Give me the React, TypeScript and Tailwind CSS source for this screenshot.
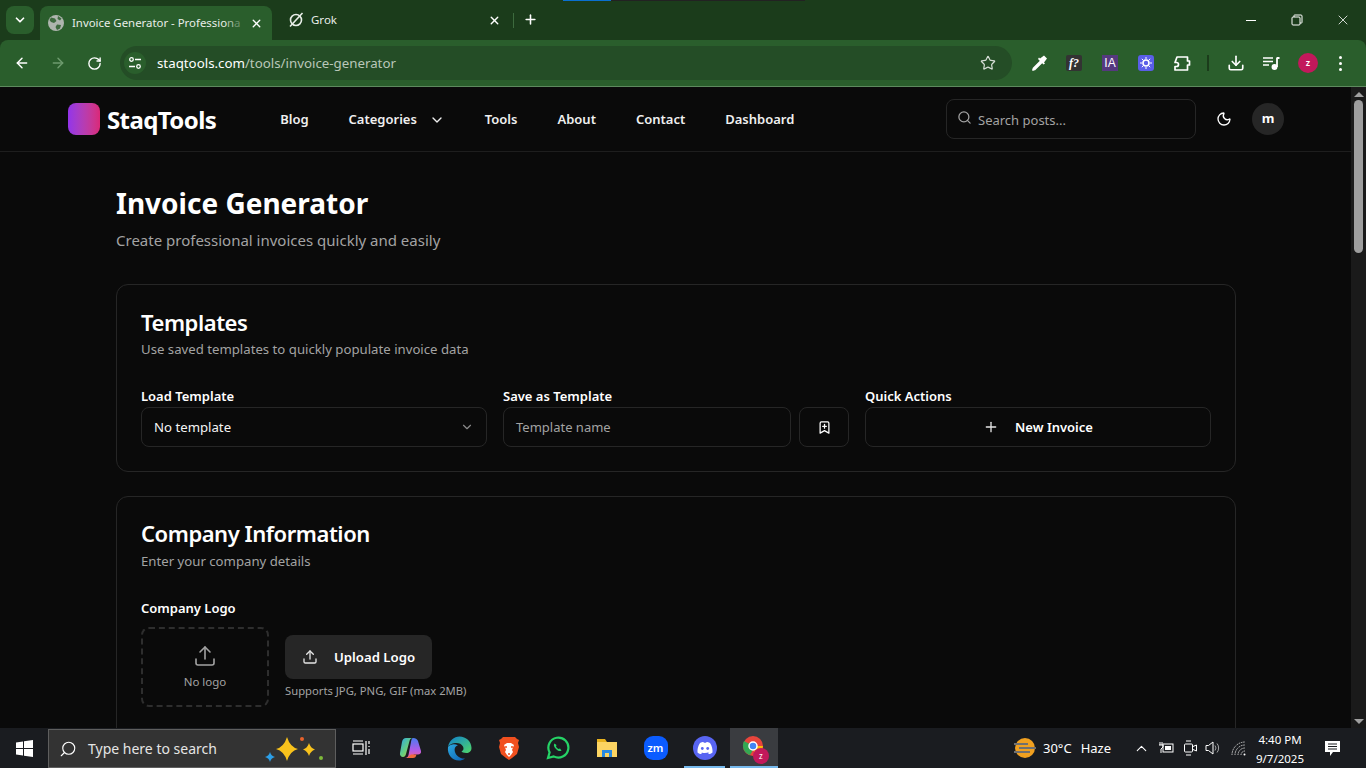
import { ArrowLeft, ArrowRight, RotateCw, Star, ChevronDown, X, Plus, Search, Moon, Upload, BookmarkPlus, Download, ChevronUp } from "lucide-react";

const font = "font-['Noto_Sans','Open_Sans',sans-serif]";

function TabStrip() {
  return (
    <div className="flex h-10 bg-[#1b3c1b] items-start relative">
      <div className="absolute left-[563px] top-0 w-[242px] h-px bg-[#222222]">
        <div className="w-[48px] h-px bg-[#0a70d0]" />
      </div>
      <div className="ml-[6px] mt-[6px] w-[28px] h-[28px] rounded-lg bg-[#2a5e2c] flex items-center justify-center text-white">
        <ChevronDown size={14} strokeWidth={3} />
      </div>
      <div className="ml-[6px] mt-[6px] w-[232px] h-[34px] rounded-t-lg bg-[#2a5e2c] flex items-center pl-[8px] text-white">
        <svg width="16" height="16" viewBox="0 0 16 16" className="shrink-0">
          <circle cx="8" cy="8" r="8" fill="#aeb5ae" />
          <path d="M3 2.500 7 3.500 8.500 6 6 8 3 7 1.500 5ZM9 9.500l4 .5-1 3.500-3 1.500-1.500-3ZM10 1l3.500 2.500L12 5.500 9.500 4Z" fill="#3d6a3e" />
        </svg>
        <span className="ml-[8px] text-[11.400px] whitespace-nowrap w-[178px] text-[#e8ede8]">Invoice Generator - Professio<span className="text-[#a9bfa9]">n</span><span className="text-[#6f936f]">a</span></span>
        <X size={13} strokeWidth={2.500} className="shrink-0" />
      </div>
      <div className="mt-[6px] w-[241px] h-[28px] flex items-center pl-[15px] pr-[12px] text-white">
        <svg width="18" height="18" viewBox="0 0 18 18" className="shrink-0" fill="none" stroke="#e8ede8" strokeWidth="1.600">
          <circle cx="9" cy="9" r="5.500" />
          <path d="M3 15.500 15.500 2" />
        </svg>
        <span className="ml-[6px] text-[11.500px] flex-1 text-[#e8ede8]">Grok</span>
        <X size={13} strokeWidth={2.500} />
      </div>
      <div className="mt-[13px] w-px h-[15px] bg-[#3d6b3e]" />
      <div className="ml-[9px] mt-[12px] text-white"><Plus size={15} strokeWidth={2.500} /></div>
      <div className="flex-1" />
      <div className="flex items-center text-white h-10">
        <div className="w-[46px] flex justify-center"><div className="w-[10px] h-px bg-white" /></div>
        <div className="w-[46px] flex justify-center">
          <svg width="12" height="12" viewBox="0 0 12 12" fill="none" stroke="white" strokeWidth="1"><rect x="1" y="3" width="8" height="8" rx="1" /><path d="M3 3V1.500a.5.5 0 0 1 .5-.5H10a1 1 0 0 1 1 1v6.500a.5.5 0 0 1-.5.5H9" /></svg>
        </div>
        <div className="w-[46px] flex justify-center"><X size={16} strokeWidth={1.200} /></div>
      </div>
    </div>
  );
}

function Toolbar() {
  return (
    <div className="h-[47px] bg-[#2a5e2c] rounded-t-lg border-b border-b-[#5d8a5e] flex items-center text-white relative">
      <ArrowLeft size={16} className="ml-[14px]" strokeWidth={2.200} />
      <ArrowRight size={16} className="ml-[20px] text-[#6e9b6e]" strokeWidth={2.200} />
      <RotateCw size={15} className="ml-[21px]" strokeWidth={2.200} />
      <div className="ml-[18px] w-[892px] h-[34px] rounded-full bg-[#244d26] flex items-center">
        <div className="ml-[4px] w-[22px] h-[22px] rounded-full bg-[#2a5e2c] flex items-center justify-center">
          <svg width="14" height="14" viewBox="0 0 14 14" fill="none" stroke="white" strokeWidth="1.300">
            <circle cx="3.500" cy="3.500" r="1.800" />
            <path d="M7 3.500h6M1 10.500h6" />
            <circle cx="10.500" cy="10.500" r="1.800" />
          </svg>
        </div>
        <span className="ml-[11px] pt-[1px] text-[13.300px] text-white">staqtools.com<span className="text-[#b9c7b9]">/tools/invoice-generator</span></span>
        <div className="flex-1" />
        <Star size={16} className="mr-[16px] text-[#d5ddd5]" strokeWidth={1.800} />
      </div>
      <svg width="18" height="18" viewBox="0 0 18 18" className="ml-[18px]">
        <path d="M11 7 3.500 14.500 3 16l1.500-.5L12 8Z" fill="#2f6fd0" stroke="white" strokeWidth="1.800" strokeLinejoin="round" />
        <path d="M10 4.500 14 1.500 17 4.500 14 8.500 15 9.500 13.500 10.500 8 5 9 3.500Z" fill="white" />
      </svg>
      <div className="ml-[18px] w-4 h-4 rounded-[2px] bg-[#333] flex items-center justify-center text-[12px] leading-none italic font-bold font-['Liberation_Serif',serif]">f?</div>
      <div className="ml-[20px] w-4 h-4 bg-[#55397f] flex items-center justify-center text-[12px] leading-none font-['Liberation_Sans',sans-serif]">IA</div>
      <div className="ml-[20px] w-4 h-4 rounded-[3px] bg-[#5a5ee8] flex items-center justify-center">
        <svg width="12" height="12" viewBox="0 0 12 12" fill="none" stroke="white"><circle cx="6" cy="6" r="3" strokeWidth="1.600" /><path d="M6 0v2M6 10v2M0 6h2M10 6h2M1.800 1.800l1.400 1.400M8.800 8.800l1.400 1.400M1.800 10.200l1.400-1.400M8.800 3.200l1.400-1.400" strokeWidth="1" /></svg>
      </div>
      <svg width="18" height="18" viewBox="0 0 18 18" fill="none" stroke="white" strokeWidth="1.700" strokeLinejoin="round" className="ml-[19px]">
        <path d="M4 3h10.500v4h2v4h-2v5H2v-3.500h1.500a1.500 1.500 0 0 0 0-4H2L4 3Z" />
      </svg>
      <div className="ml-[16px] w-[2px] h-[16px] bg-[#1b3c1b]" />
      <Download size={18} className="ml-[18px]" strokeWidth={2.200} />
      <svg width="17" height="16" viewBox="0 0 17 16" fill="none" stroke="white" strokeWidth="1.500" className="ml-[18px]">
        <path d="M0 3h10M0 6.500h10M0 10h6" />
        <path d="M14 3h2.500M14 2.500V12" strokeWidth="1.800" />
        <circle cx="11.500" cy="12" r="2.200" fill="white" />
      </svg>
      <div className="ml-[18px] w-5 h-5 rounded-full bg-[#c2185b] flex items-center justify-center text-[9px] font-semibold">z</div>
      <div className="ml-[21px] flex flex-col gap-[3px]">
        <div className="w-[3px] h-[3px] rounded-full bg-white" />
        <div className="w-[3px] h-[3px] rounded-full bg-white" />
        <div className="w-[3px] h-[3px] rounded-full bg-white" />
      </div>
    </div>
  );
}

function NavBar() {
  return (
    <div className="h-[65px] border-b border-b-[#1e1e1e] flex items-center pl-[68px] pr-[67px] shrink-0">
      <div className="w-8 h-8 rounded-lg bg-gradient-to-r from-[#9333ea] to-[#db2777]" />
      <span className="ml-[7px] mt-[2px] text-[24px] font-bold text-white tracking-[-0.6px]">StaqTools</span>
      <nav className="ml-[64px] pt-[2px] flex items-center gap-[40px] text-[13px] font-semibold text-[#f0f0f0]">
        <span>Blog</span>
        <span className="flex items-center">Categories<ChevronDown size={16} className="ml-[12px]" /></span>
        <span>Tools</span>
        <span>About</span>
        <span>Contact</span>
        <span>Dashboard</span>
      </nav>
      <div className="flex-1" />
      <div className="w-[250px] h-10 border border-[#262626] rounded-lg flex items-center pl-[10px] text-[#a3a3a3]">
        <Search size={15} className="-mt-[3px]" />
        <span className="ml-[6px] pt-[3px] text-[13px]">Search posts...</span>
      </div>
      <Moon size={16} className="ml-[20px] text-white" />
      <div className="ml-[20px] w-8 h-8 rounded-full bg-[#262626] flex items-center justify-center text-white text-[13px] font-bold">m</div>
    </div>
  );
}

function Label({ children }: { children: React.ReactNode }) {
  return <div className="text-[13px] font-semibold text-white leading-[20px] mb-[1px]">{children}</div>;
}

function Main() {
  return (
    <div className="flex-1 overflow-hidden pl-[116px] pr-[115px]">
      <h1 className="mt-[31px] text-[28px] leading-[40px] font-bold text-white">Invoice Generator</h1>
      <p className="mt-[6px] text-[15px] leading-[23px] text-[#a3a3a3]">Create professional invoices quickly and easily</p>

      <section className="mt-[32px] h-[188px] border border-[#262626] rounded-xl px-[24px] pt-[23px]">
        <h2 className="text-[22px] leading-[28px] font-semibold text-white tracking-[-0.450px]">Templates</h2>
        <p className="mt-[3px] text-[13.200px] leading-[20px] text-[#a3a3a3]">Use saved templates to quickly populate invoice data</p>
        <div className="mt-[27px] grid grid-cols-3 gap-[16px]">
          <div>
            <Label>Load Template</Label>
            <div className="h-10 border border-[#262626] rounded-lg flex items-center justify-between px-[12px] text-[13.200px] text-[#f5f5f5]">
              <span className="pt-[1px]">No template</span>
              <ChevronDown size={14} className="text-[#8a8a8a]" />
            </div>
          </div>
          <div>
            <Label>Save as Template</Label>
            <div className="flex gap-[8px]">
              <div className="flex-1 h-10 border border-[#262626] rounded-lg flex items-center px-[12px] pt-[2px] text-[13px] text-[#a3a3a3]">Template name</div>
              <div className="w-[50px] h-10 border border-[#262626] rounded-lg flex items-center justify-center text-white"><BookmarkPlus size={15} /></div>
            </div>
          </div>
          <div>
            <Label>Quick Actions</Label>
            <div className="h-10 border border-[#262626] rounded-lg flex items-center justify-center text-[13px] font-semibold text-white">
              <Plus size={16} className="mr-[16px] text-[#e5e5e5]" /><span className="pt-[1px]">New Invoice</span>
            </div>
          </div>
        </div>
      </section>

      <section className="mt-[24px] h-[300px] border border-[#262626] rounded-xl px-[24px] pt-[22px]">
        <h2 className="text-[22px] leading-[28px] font-semibold text-white tracking-[-0.450px]">Company Information</h2>
        <p className="mt-[4px] text-[13.200px] leading-[20px] text-[#a3a3a3]">Enter your company details</p>
        <div className="mt-[27px]"><Label>Company Logo</Label></div>
        <div className="mt-[9px] flex items-center">
          <div className="w-32 h-20 border-2 border-dashed border-[#2e2e2e] rounded-lg flex flex-col items-center justify-center text-[#a3a3a3]">
            <Upload size={24} strokeWidth={1.600} />
            <span className="mt-[5px] text-[11.500px]">No logo</span>
          </div>
          <div className="ml-[16px]">
            <div className="w-[147px] h-11 rounded-lg bg-[#262626] flex items-center justify-center text-[13.200px] font-semibold text-white">
              <Upload size={16} className="mr-[16px] text-[#e5e5e5]" /><span className="pt-[1px]">Upload Logo</span>
            </div>
            <p className="mt-[4px] text-[11.250px] leading-[16px] text-[#a3a3a3]">Supports JPG, PNG, GIF (max 2MB)</p>
          </div>
        </div>
      </section>
    </div>
  );
}

function Scrollbar() {
  return (
    <div className="w-[15px] shrink-0 bg-[#1a1a1a] flex flex-col items-center relative">
      <div className="mt-[5px] w-0 h-0 border-l-[5px] border-r-[5px] border-b-[5px] border-l-transparent border-r-transparent border-b-[#a0a0a0]" />
      <div className="mt-[3px] w-[9px] h-[153px] rounded-full bg-[#9e9e9e]" />
      <div className="flex-1" />
      <div className="mb-[4px] w-0 h-0 border-l-[5px] border-r-[5px] border-t-[5px] border-l-transparent border-r-transparent border-t-[#a0a0a0]" />
    </div>
  );
}

function Slot({ w = 49, className = "", children }: { w?: number; className?: string; children: React.ReactNode }) {
  return <div className={`flex justify-center items-center h-10 ${className}`} style={{ width: w }}>{children}</div>;
}

function Taskbar() {
  return (
    <div className="h-10 bg-[#1a1c20] flex items-center text-white shrink-0 relative">
      <Slot w={48}>
        <svg width="17" height="17" viewBox="0 0 17 17" fill="white"><path d="M0 2.400 7 1.400V8H0ZM8 1.200 17 0V8H8ZM0 9H7V15.600L0 14.600ZM8 9H17V17L8 15.800Z" /></svg>
      </Slot>
      <div className="w-[288px] h-[39px] mt-[1px] bg-[#333] border border-[#5e5e5e] flex items-center relative">
        <Search size={18} className="ml-[10px] -scale-x-100" strokeWidth={1.500} />
        <span className="ml-[11px] text-[14px] text-[#e5e5e5]">Type here to search</span>
        <svg width="62" height="30" viewBox="0 0 62 30" className="absolute left-[214px] top-[4px]">
          <path d="M24 3 Q27 13 35 15 Q27 17 24 27 Q21 17 13 15 Q21 13 24 3Z" fill="#f8c21c" />
          <path d="M46 9 Q47.500 14 52 15.500 Q47.500 17 46 22 Q44.500 17 40 15.500 Q44.500 14 46 9Z" fill="#f8c21c" />
          <circle cx="39" cy="5" r="2" fill="#e8622c" />
          <circle cx="58" cy="24" r="2" fill="#7fba3a" />
          <path d="M7 18 Q8 22 12 23 Q8 24 7 28 Q6 24 2 23 Q6 22 7 18Z" fill="#2c9fe8" />
        </svg>
      </div>
      <Slot w={50}>
        <svg width="18" height="16" viewBox="0 0 18 16" fill="none" stroke="white" strokeWidth="1.200"><rect x="1" y="4" width="10" height="7" /><path d="M1 1h10M1 14h10M14 1v14M17 1v3M17 6v1M17 9v5" /></svg>
      </Slot>
      <Slot>
        <svg width="23" height="22" viewBox="0 0 23 22">
          <defs>
            <linearGradient id="cpa" x1="0" y1="0" x2="1" y2="1"><stop offset="0" stopColor="#2aa8e8" /><stop offset=".55" stopColor="#6ad07a" /><stop offset="1" stopColor="#f5b83c" /></linearGradient>
            <linearGradient id="cpb" x1="0" y1="0" x2="0" y2="1"><stop offset="0" stopColor="#4a7cf0" /><stop offset=".6" stopColor="#b05ce8" /><stop offset="1" stopColor="#f0609c" /></linearGradient>
          </defs>
          <path d="M7 1h7c-2 0-3 1-3.500 3L7 17c-.5 2-1.500 3-3 3-2 0-3.500-2-3-4L3 5c.5-2.500 2-4 4-4Z" fill="url(#cpa)" />
          <path d="M14 1c3 0 4.500 1.500 5 3l3 10c.5 2-1 3.500-3 3.500h-4l-2 1.500c-.5 1-1.500 2-3 2H6c2 0 3-1 3.500-3L12 5c.3-2 1-4 2-4Z" fill="url(#cpb)" />
          <path d="M8 21h6c2 0 3-1 3.500-3.500H12Z" fill="#f06a3c" />
        </svg>
      </Slot>
      <Slot>
        <svg width="25" height="25" viewBox="0 0 25 25">
          <defs>
            <linearGradient id="eda" x1="0" y1="0" x2="1" y2="1"><stop offset="0" stopColor="#0f7fd0" /><stop offset="1" stopColor="#50d868" /></linearGradient>
            <linearGradient id="edb" x1="0" y1="0" x2="1" y2="1"><stop offset="0" stopColor="#2ca8e0" /><stop offset="1" stopColor="#0c62b4" /></linearGradient>
          </defs>
          <path d="M1 11C2 5 7 .5 12.500 .5 19 .5 24.500 5.500 24.500 12c0 3.500-2.500 5-5 5-3 0-4.500-1-5-1.500 2-1 2.500-3 1.500-5C14.500 7.500 11 6.500 8 7 4.500 7.500 2 9 1 11Z" fill="url(#eda)" />
          <path d="M1 11c2.500-3 7-3.500 10-1.500-3 .5-4 3.500-3 6.500 1 3.500 5 7 10 6.500-2 1.500-4 2-6 2C5 24.500 0 18.500 1 11Z" fill="url(#edb)" />
        </svg>
      </Slot>
      <Slot>
        <svg width="20" height="24" viewBox="0 0 20 24">
          <path d="M4 1h12l2 2 2 1-1 3 1 4-2 7-5 4-3 2-3-2-5-4-2-7 1-4-1-3 2-1Z" fill="#f1501f" />
          <path d="M5 9l3-2h4l3 2-2 5 1 2-2 3-2 2-2-2-2-3 1-2Z" fill="white" />
          <path d="M8 11H6M12 11h2M9 18h2" stroke="#f1501f" strokeWidth="1.500" />
        </svg>
      </Slot>
      <Slot>
        <svg width="24" height="24" viewBox="0 0 24 24" fill="none"><path d="M2 22l1.600-5.600A10 10 0 1 1 7.600 20.400Z" stroke="#25d366" strokeWidth="2.200" /><path d="M8.500 7.500c-1 1-1 3 1.500 5.500s4.500 2.500 5.500 1.500l-1.500-2-1.500.5c-1-.5-2-1.500-2.500-2.500l.5-1.500Z" fill="#25d366" /></svg>
      </Slot>
      <Slot>
        <svg width="22" height="22" viewBox="0 0 22 22"><path d="M1 2h8l2 3H1Z" fill="#e8b21e" /><rect x="1" y="5" width="20" height="15" fill="#fcd462" /><rect x="6" y="13" width="10" height="7" fill="#2a8ae0" /><rect x="9" y="16" width="4" height="4" fill="#fcd462" /></svg>
      </Slot>
      <Slot>
        <div className="w-[24px] h-[24px] rounded-[9px] bg-[#0b5cff] flex items-center justify-center text-[11px] font-semibold">zm</div>
      </Slot>
      <Slot className="relative">
        <div className="w-[24px] h-[24px] rounded-full bg-[#5865f2] flex items-center justify-center">
          <svg width="16" height="12" viewBox="0 0 16 12" fill="white"><path d="M3 1c1.500-.7 2.500-1 3.500-1l.3.7h2.400L9.500 0c1 0 2 .3 3.500 1 2 3 2.800 6.500 2.500 9.500-1.500 1-2.500 1.500-3.700 1.500l-.8-1.300c.5-.2 1-.5 1.400-.8-3 1.400-6.800 1.400-8.800 0 .4.300.9.600 1.400.8L4.200 12C3 12 2 11.500.5 10.500.2 7.500 1 4 3 1Z" /><circle cx="5.300" cy="6.500" r="1.400" fill="#5865f2" /><circle cx="10.700" cy="6.500" r="1.400" fill="#5865f2" /></svg>
        </div>
        <div className="absolute left-[4px] right-[4px] bottom-0 h-[2px] bg-[#76b9ed]" />
      </Slot>
      <div className="ml-[1px] w-[48px] h-10 bg-[#3a3c40] flex justify-center items-center relative border-b-[2px] border-b-[#76b9ed]">
        <svg width="24" height="24" viewBox="0 0 24 24"><circle cx="11" cy="11" r="10" fill="#e8453c" /><path d="M2 6a10 10 0 0 0 6 14l5-8Z" fill="#34a853" /><path d="M11 11h10a10 10 0 0 1-8 9.800Z" fill="#fbbc05" /><circle cx="11" cy="11" r="4" fill="#4285f4" stroke="white" strokeWidth="1.500" /></svg>
        <div className="absolute right-[9px] bottom-[2px] w-[16px] h-[16px] rounded-full bg-[#c2185b] text-[8px] flex items-center justify-center">z</div>
      </div>
      <div className="flex-1" />
      <svg width="24" height="24" viewBox="0 0 24 24"><circle cx="12" cy="12" r="10" fill="#f0a020" /><path d="M1 8h14M6 12h17M1 16h16" stroke="#707070" strokeWidth="2" /></svg>
      <span className="ml-[6px] mt-[1px] text-[13px]">30°C</span>
      <span className="ml-[9px] mt-[1px] text-[13px]">Haze</span>
      <ChevronUp size={17} className="ml-[22px]" strokeWidth={1.500} />
      <svg width="16" height="14" viewBox="0 0 16 14" fill="white" className="ml-[8px]"><rect x="5" y="3" width="10" height="8" stroke="white" fill="none" /><rect x="7" y="5" width="6" height="4" /><path d="M2 1v3M4 1v3M1 4h4v2L3 8v4" stroke="white" fill="none" /></svg>
      <svg width="15" height="18" viewBox="0 0 15 18" fill="none" stroke="white" className="ml-[9px]"><rect x="1.500" y="5" width="8" height="8" rx="1" /><path d="M10 7.500l3.500-1.500v6l-3.500-1.500M3 2h5M3 16h5" /></svg>
      <svg width="16" height="16" viewBox="0 0 16 16" fill="none" stroke="white" className="ml-[7px]"><path d="M1 5.500h2.500L8 2v12L3.500 10.500H1Z" /><path d="M10 5.500a4 4 0 0 1 0 5M12 3.500a7 7 0 0 1 0 9" strokeOpacity=".6" /></svg>
      <svg width="15" height="15" viewBox="0 0 15 15" fill="none" stroke="#c9c9c9" className="ml-[10px]"><path d="M1 14A13 13 0 0 1 14 1M4 14A10 10 0 0 1 14 4M7 14a7 7 0 0 1 7-7M10 14a4 4 0 0 1 4-4" strokeDasharray="1.500 .8" /><circle cx="13.500" cy="13.500" r="1" fill="white" stroke="none" /></svg>
      <div className="ml-[8px] pt-[2px] w-[52px] flex flex-col items-center text-[11.500px] leading-[19px]">
        <span>4:40 PM</span>
        <span>9/7/2025</span>
      </div>
      <div className="ml-[17px] mr-[25px] w-[18px] flex justify-center">
        <svg width="17" height="17" viewBox="0 0 17 17" fill="white"><path d="M1 1h15v11H9l-3 4v-4H1Z" /><path d="M4 4h9M4 6.500h9M4 9h9" stroke="#1a1c20" /></svg>
      </div>
    </div>
  );
}

export default function App() {
  return (
    <div className={`h-screen w-full flex flex-col overflow-hidden bg-[#0a0a0a] ${font}`}>
      <div className="bg-[#1b3c1b] shrink-0">
        <TabStrip />
        <Toolbar />
      </div>
      <div className="flex-1 flex min-h-0">
        <div className="flex-1 flex flex-col min-w-0">
          <NavBar />
          <Main />
        </div>
        <Scrollbar />
      </div>
      <Taskbar />
    </div>
  );
}
